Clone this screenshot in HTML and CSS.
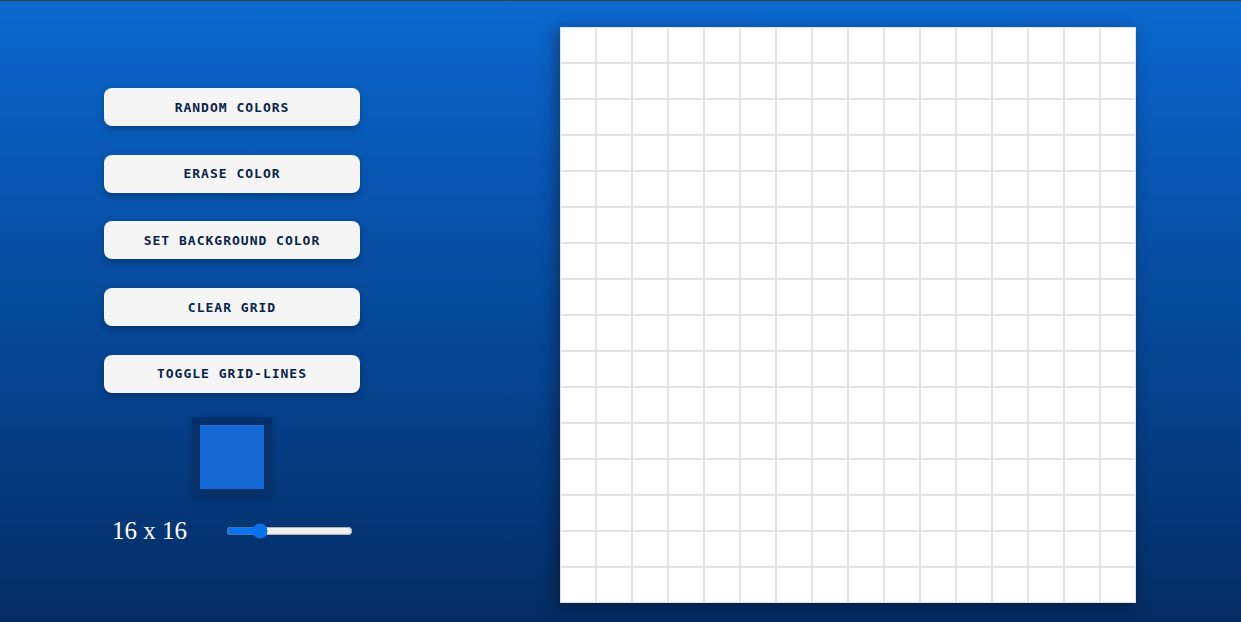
FILE: index.html
```html
<!DOCTYPE html>
<html>
<head>
<meta charset="utf-8">
<link rel="stylesheet" href="styles.css">
</head>
<body>
<div class="page">
  <div class="controls">
    <button class="btn">Random Colors</button>
    <button class="btn">Erase Color</button>
    <button class="btn">Set Background Color</button>
    <button class="btn">Clear Grid</button>
    <button class="btn">Toggle Grid-Lines</button>
    <div class="swatch-wrap"><div class="swatch"></div></div>
    <div class="size-row">
      <span class="size-label">16 x 16</span>
      <input class="slider" type="range" min="1" max="64" value="16">
    </div>
  </div>
  <div class="grid" id="grid"></div>
</div>
<script>
  var g = document.getElementById('grid');
  for (var i = 0; i < 256; i++) {
    var c = document.createElement('div');
    c.className = 'cell';
    g.appendChild(c);
  }
</script>
</body>
</html>
```
FILE: styles.css
```css
html, body {
  margin: 0;
  padding: 0;
  height: 100%;
}
body {
  border-top: 1px solid #3b3b3b;
  box-sizing: border-box;
  background: linear-gradient(to bottom, #0b68ce 0%, #0858b4 25%, #064390 60%, #032c62 100%);
  overflow: hidden;
}
.page {
  display: flex;
  align-items: flex-start;
  height: 621px;
}
.controls {
  width: 256px;
  margin-left: 104px;
  margin-top: 87px;
  display: flex;
  flex-direction: column;
  align-items: center;
}
.btn {
  width: 256px;
  height: 38px;
  margin-bottom: 28.7px;
  border: none;
  border-radius: 8px;
  background: #f5f5f5;
  color: #0a234d;
  font-family: "DejaVu Sans Mono", monospace;
  font-size: 13px;
  font-weight: bold;
  letter-spacing: 1px;
  text-transform: uppercase;
  box-shadow: 0 3px 6px rgba(0, 0, 0, 0.25);
  padding: 0;
  cursor: pointer;
}
.swatch-wrap {
  margin-top: -4px;
  width: 64px;
  height: 64px;
  border: 8px solid #05306a;
  box-shadow: 0 2px 6px rgba(0, 0, 0, 0.15);
}
.swatch {
  width: 64px;
  height: 64px;
  background: #1469d4;
}
.size-row {
  display: flex;
  align-items: center;
  width: 256px;
  margin-top: 20px;
}
.size-label {
  font-family: "Liberation Serif", serif;
  font-size: 25px;
  color: #ffffff;
  margin-left: 8px;
  width: 114px;
}
.slider {
  width: 127px;
  margin: 0;
  accent-color: #0b72ee;
}
.grid {
  margin-left: 200px;
  margin-top: 26px;
  width: 576px;
  height: 576px;
  display: grid;
  grid-template-columns: repeat(16, 36px);
  grid-template-rows: repeat(16, 36px);
  background: #ffffff;
  box-shadow: -4px 4px 16px rgba(0, 0, 0, 0.35);
}
.cell {
  box-sizing: border-box;
  border: 1px solid #e3e3e3;
  background: #ffffff;
}
```
